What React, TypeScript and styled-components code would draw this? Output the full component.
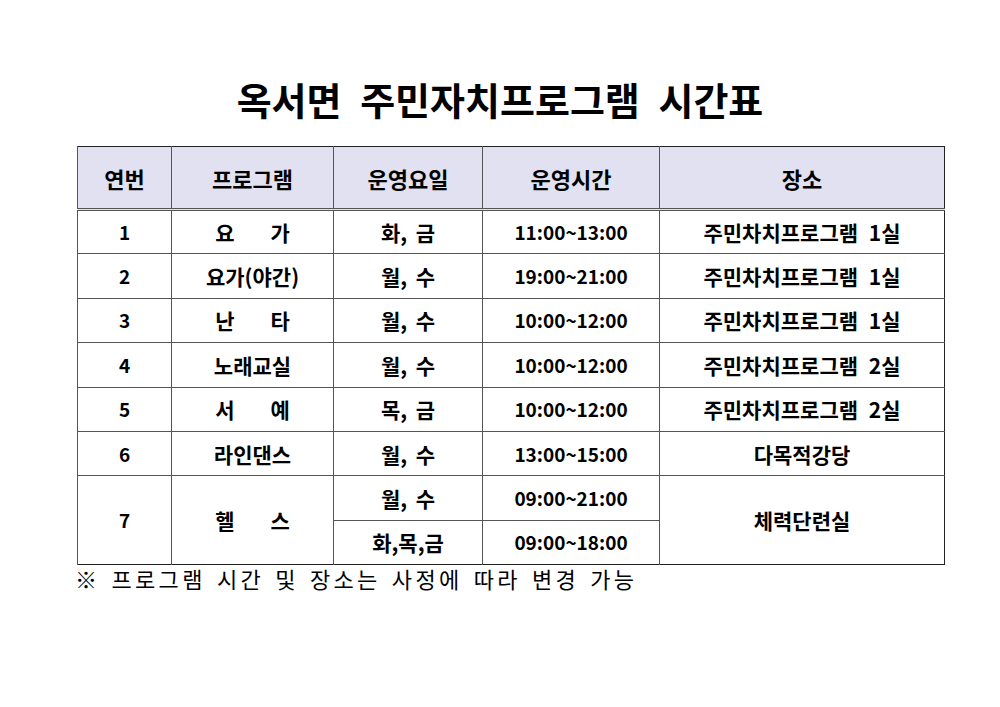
import styled, { createGlobalStyle } from 'styled-components';

type Row = {
  no: string;
  program: string;
  spread?: boolean;
  slots: { days: string; time: string }[];
  place: string;
};

const rows: Row[] = [
  { no: '1', program: '요가', spread: true, slots: [{ days: '화, 금', time: '11:00~13:00' }], place: '주민차치프로그램 1실' },
  { no: '2', program: '요가(야간)', slots: [{ days: '월, 수', time: '19:00~21:00' }], place: '주민차치프로그램 1실' },
  { no: '3', program: '난타', spread: true, slots: [{ days: '월, 수', time: '10:00~12:00' }], place: '주민차치프로그램 1실' },
  { no: '4', program: '노래교실', slots: [{ days: '월, 수', time: '10:00~12:00' }], place: '주민차치프로그램 2실' },
  { no: '5', program: '서예', spread: true, slots: [{ days: '목, 금', time: '10:00~12:00' }], place: '주민차치프로그램 2실' },
  { no: '6', program: '라인댄스', slots: [{ days: '월, 수', time: '13:00~15:00' }], place: '다목적강당' },
  {
    no: '7',
    program: '헬스',
    spread: true,
    slots: [
      { days: '월, 수', time: '09:00~21:00' },
      { days: '화,목,금', time: '09:00~18:00' },
    ],
    place: '체력단련실',
  },
];

export default function App() {
  return (
    <>
      <GlobalStyle />
      <Page>
        <Title>옥서면 주민자치프로그램 시간표</Title>
        <TableWrap>
          <Table>
            <colgroup>
              <col style={{ width: 94 }} />
              <col style={{ width: 162 }} />
              <col style={{ width: 149 }} />
              <col style={{ width: 177 }} />
              <col />
            </colgroup>
            <thead>
              <tr>
                <HeadCell>연번</HeadCell>
                <HeadCell>프로그램</HeadCell>
                <HeadCell>운영요일</HeadCell>
                <HeadCell>운영시간</HeadCell>
                <HeadCell>장소</HeadCell>
              </tr>
            </thead>
            <tbody>
              {rows.map((r) =>
                r.slots.map((s, i) => (
                  <BodyRow key={r.no + '-' + i}>
                    {i === 0 && (
                      <Cell rowSpan={r.slots.length} $digits>
                        {r.no}
                      </Cell>
                    )}
                    {i === 0 && (
                      <Cell rowSpan={r.slots.length}>
                        {r.spread ? <Spread>{r.program}</Spread> : r.program}
                      </Cell>
                    )}
                    <Cell $dotted>{s.days}</Cell>
                    <Cell $digits>{s.time}</Cell>
                    {i === 0 && (
                      <Cell rowSpan={r.slots.length}>
                        <Place>{r.place}</Place>
                      </Cell>
                    )}
                  </BodyRow>
                ))
              )}
            </tbody>
          </Table>
        </TableWrap>
        <Note>※ 프로그램 시간 및 장소는 사정에 따라 변경 가능</Note>
      </Page>
    </>
  );
}

const GlobalStyle = createGlobalStyle`
  html, body {
    margin: 0;
    background: #ffffff;
  }
  body {
    font-family: "Noto Sans CJK KR", "Noto Sans", sans-serif;
    color: #000;
  }
`;

const Page = styled.div`
  width: 1000px;
  height: 707px;
  padding-top: 74px;
  box-sizing: border-box;
`;

const Title = styled.h1`
  margin: 0 0 22px;
  text-align: center;
  font-size: 38px;
  line-height: 50px;
  font-weight: 700;
  word-spacing: 10px;
`;

const TableWrap = styled.div`
  padding-left: 77px;
`;

const Table = styled.table`
  width: 868px;
  border-collapse: collapse;
  table-layout: fixed;
  border: 1.5px solid #222;
`;

const HeadCell = styled.th`
  height: 61px;
  padding: 0;
  background: #e1e1f2;
  border-left: 1px solid #555;
  border-bottom: 3px double #555;
  font-size: 22px;
  font-weight: 700;
  text-align: center;
  vertical-align: middle;
`;

const BodyRow = styled.tr`
  height: 44.4px;
`;

const Cell = styled.td<{ $dotted?: boolean; $digits?: boolean }>`
  padding: 0;
  border-left: 1px solid #555;
  border-top: 1px solid #555;
  border-right: ${(p) => (p.$dotted ? '1px dotted #999' : 'none')};
  font-size: ${(p) => (p.$digits ? '19px' : '21px')};
  font-weight: 700;
  text-align: center;
  vertical-align: middle;
  line-height: 24px;
  word-spacing: 4px;
`;

const Spread = styled.span`
  letter-spacing: 36px;
  margin-right: -36px;
`;

const Place = styled.span`
  word-spacing: 6px;
`;

const Note = styled.p`
  margin: 0;
  padding-left: 75px;
  font-size: 22px;
  line-height: 26px;
  font-weight: 400;
  letter-spacing: 3.3px;
  word-spacing: 3px;
`;
